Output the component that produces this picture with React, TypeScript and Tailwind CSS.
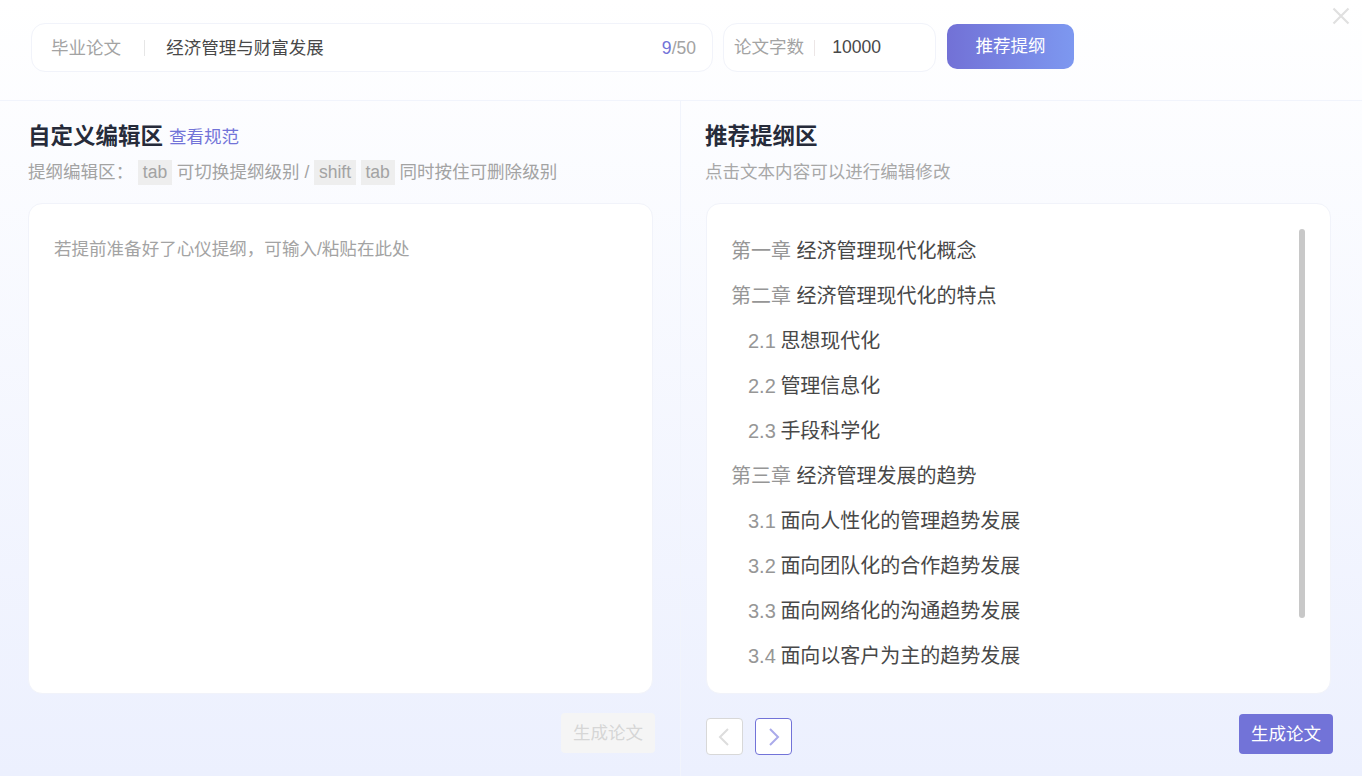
import React from "react";

const rows: [string, string, boolean][] = [
  ["第一章", "经济管理现代化概念", false],
  ["第二章", "经济管理现代化的特点", false],
  ["2.1", "思想现代化", true],
  ["2.2", "管理信息化", true],
  ["2.3", "手段科学化", true],
  ["第三章", "经济管理发展的趋势", false],
  ["3.1", "面向人性化的管理趋势发展", true],
  ["3.2", "面向团队化的合作趋势发展", true],
  ["3.3", "面向网络化的沟通趋势发展", true],
  ["3.4", "面向以客户为主的趋势发展", true],
];

function Key({ children }: { children: React.ReactNode }) {
  return <span className="inline-block h-[25px] bg-[#eeeeee] px-[4.75px] leading-[25px]">{children}</span>;
}

export default function App() {
  return (
    <div className="flex h-[776px] w-[1362px] flex-col overflow-hidden bg-gradient-to-b from-[#ffffff] to-[#ecf0fe] font-['Liberation_Sans','Noto_Sans_CJK_SC',sans-serif] text-[17.55px]">
      <header className="relative flex h-[101px] shrink-0 items-start border-b border-[#f1f4fc] pl-[31px] pt-[23px]">
        <div className="flex h-[49px] w-[682px] items-center rounded-[14px] border border-[#f1f3fa] bg-white pl-[19px] pr-[16px] pt-[1px]">
          <span className="text-[#a3a3a3]">毕业论文</span>
          <span className="ml-[23px] h-[16px] w-px bg-[#e6e6e6]" />
          <span className="ml-[21px] flex-1 text-[#484848]">经济管理与财富发展</span>
          <span className="text-[#a3a3a3]"><span className="text-[#7273d8]">9</span>/50</span>
        </div>
        <div className="ml-[10px] flex h-[49px] w-[213px] items-center rounded-[14px] border border-[#f1f3fa] bg-white pl-[10px]">
          <span className="text-[#a3a3a3]">论文字数</span>
          <span className="ml-[10px] h-[16px] w-px bg-[#ece6e6]" />
          <span className="ml-[17px] text-[#484848]">10000</span>
        </div>
        <button className="ml-[11px] mt-px h-[45px] w-[127px] rounded-[10px] bg-gradient-to-r from-[#7271d6] to-[#7d98f0] text-white">推荐提纲</button>
        <svg className="absolute left-[1332px] top-[7px]" width="18" height="18" viewBox="0 0 18 18" fill="none" stroke="#e0e0e0" strokeWidth="2.2">
          <path d="M1.5 1.5L16.5 16.5M16.5 1.5L1.5 16.5" />
        </svg>
      </header>
      <main className="flex min-h-0 flex-1">
        <section className="flex w-[681px] shrink-0 flex-col border-r border-[#f1f4fc] pl-[28px] pr-[27px] pt-[19px]">
          <div className="flex h-[32px] items-center pt-[2px]">
            <h2 className="text-[22.5px] font-bold text-[#262b3a]">自定义编辑区</h2>
            <a className="ml-[6px] text-[#7273d8]">查看规范</a>
          </div>
          <p className="mt-[8px] h-[25px] whitespace-nowrap leading-[25px] text-[#a3a3a3]">
            提纲编辑区： <Key>tab</Key> 可切换提纲级别 / <Key>shift</Key> <Key>tab</Key> 同时按住可删除级别
          </p>
          <div className="mt-[18px] h-[491px] w-[625px] rounded-[14px] border border-[#f1f3fa] bg-white px-[25px] pt-[32px] leading-[26px] text-[#a3a3a3]">
            若提前准备好了心仪提纲，可输入/粘贴在此处
          </div>
          <div className="mt-[19px] flex justify-end">
            <button className="mr-[-2px] h-[40px] w-[94px] rounded-[4px] bg-[#f5f5f5] text-[#d6d6d6]">生成论文</button>
          </div>
        </section>
        <section className="flex min-w-0 flex-1 flex-col pl-[25px] pt-[19px]">
          <h2 className="ml-[-1px] flex h-[32px] items-center pt-[2px] text-[22.5px] font-bold text-[#262b3a]">推荐提纲区</h2>
          <p className="ml-[-1px] mt-[8px] h-[25px] leading-[25px] text-[#a8a8a8]">点击文本内容可以进行编辑修改</p>
          <div className="relative mt-[18px] h-[491px] w-[625px] rounded-[14px] border border-[#f1f3fa] bg-white pl-[24px] pt-[25px] text-[20px]">
            {rows.map(([n, t, sub]) => (
              <div key={n} className={`h-[45px] leading-[45px] ${sub ? "pl-[17px]" : ""}`}>
                <span className="text-[#969696]">{n}</span>{" "}
                <span className={`text-[#484848] ${sub ? "ml-[-1px]" : ""}`}>{t}</span>
              </div>
            ))}
            <div className="absolute left-[592px] top-[25px] h-[389px] w-[6px] rounded-[3px] bg-[#c8c8c8]" />
          </div>
          <div className="mt-[24px] flex items-start">
            <button className="flex h-[37px] w-[37px] items-center justify-center rounded-[4px] border border-[#d8d8d8] bg-white">
              <svg className="mr-[2px]" width="12" height="18" viewBox="0 0 12 18" fill="none" stroke="#dddddd" strokeWidth="2"><path d="M10 1L2 9L10 17" /></svg>
            </button>
            <button className="ml-[12px] flex h-[37px] w-[37px] items-center justify-center rounded-[4px] border border-[#7273d8] bg-white">
              <svg width="12" height="18" viewBox="0 0 12 18" fill="none" stroke="#aaaaea" strokeWidth="2"><path d="M2 1L10 9L2 17" /></svg>
            </button>
            <button className="ml-[447px] mt-[-4px] h-[40px] w-[94px] rounded-[4px] bg-[#7273d8] text-white">生成论文</button>
          </div>
        </section>
      </main>
    </div>
  );
}
